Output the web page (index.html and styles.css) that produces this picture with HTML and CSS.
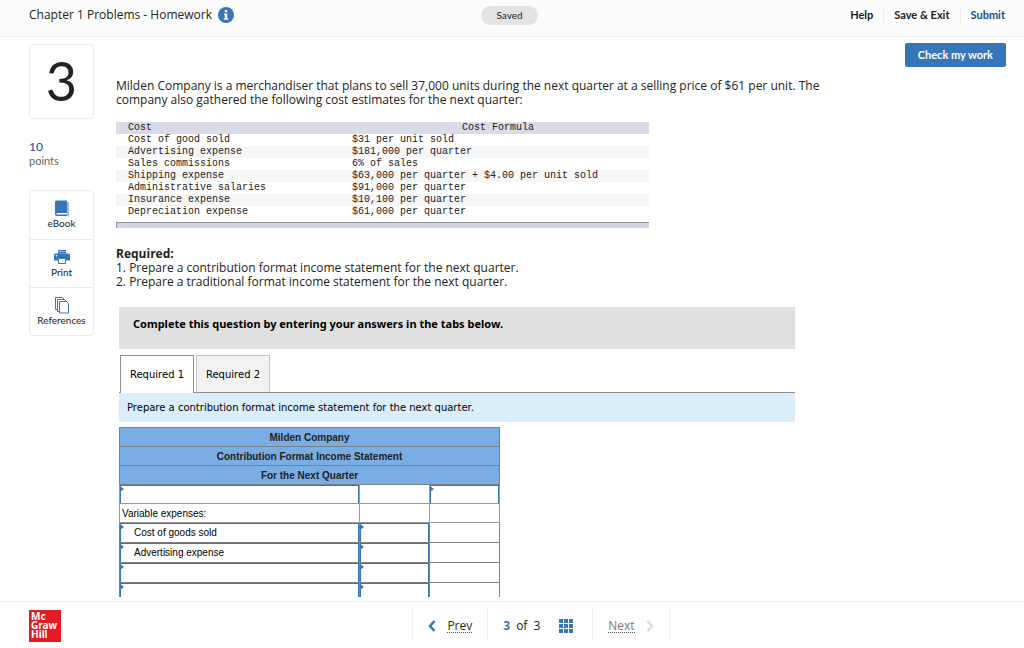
FILE: index.html
```html
<!DOCTYPE html>
<html lang="en">

<head>
  <meta charset="UTF-8" />
  <meta name="viewport" content="width=device-width, initial-scale=1.0" />
  <title>Chapter 1 Problems - Homework</title>
  <link rel="stylesheet" href="styles.css">
</head>

<body>
  <header class="topbar">
    <div class="topbar-title">
      <h1>Chapter 1 Problems - Homework</h1>
      <button class="info" type="button" aria-label="Assignment info">
        <svg width="16" height="16" viewBox="0 0 16 16">
          <circle cx="8" cy="8" r="8" fill="#3775b9" />
          <path d="M6.8 3h2.5v2.2H6.8zM6 6.4h3.3v4.8h1v1.5H5.8v-1.5h1V7.9H6z" fill="#fff" />
        </svg>
      </button>
    </div>
    <span class="saved">Saved</span>
    <nav class="topbar-nav">
      <a href="#">Help</a>
      <a href="#">Save &amp; Exit</a>
      <a href="#" class="submit">Submit</a>
    </nav>
  </header>

  <main class="main">
    <aside class="side">
      <div class="number">3</div>
      <div class="points"><span>10</span>points</div>
      <div class="tools">
        <button type="button">
          <svg width="16" height="17" viewBox="0 0 16 17">
            <path d="M13 2h2v14H3v-1h10z" fill="#9dbcdd" />
            <path d="M2.5 0.5H13V13H3.2a.8.8 0 0 0 0 1.6H13V16H3a2 2 0 0 1-2-2V2A1.5 1.5 0 0 1 2.5 0.5z" fill="#3775b9" />
          </svg>
          eBook
        </button>
        <button type="button">
          <svg width="16" height="17" viewBox="0 0 16 17">
            <path d="M4 1h8v4H4z" fill="#9dbcdd" />
            <path d="M4 1.5h8M4 3.5h8" stroke="#3775b9" />
            <path d="M1.5 4.5h13A1.5 1.5 0 0 1 16 6v5.500h-4V9H4v2.500H0V6A1.5 1.5 0 0 1 1.5 4.5z" fill="#3775b9" />
            <path d="M4.5 9.5h7v5h-7z" fill="#fff" stroke="#3775b9" />
            <circle cx="2.5" cy="6.8" r=".8" fill="#fff" />
          </svg>
          Print
        </button>
        <button type="button">
          <svg width="16" height="17" viewBox="0 0 16 17">
            <g fill="#fff" stroke="#3775b9">
              <path d="M1.5 0.5h7l2 2v10h-9z" />
              <path d="M3.5 2.5h7l2 2v10h-9z" />
              <path d="M5.5 4.5h7l2 2v9.5h-9z" />
            </g>
          </svg>
          References
        </button>
      </div>
    </aside>

    <section class="question">
      <p>Milden Company is a merchandiser that plans to sell 37,000 units during the next quarter at a selling price of $61 per unit. The company also gathered the following cost estimates for the next quarter:</p>

      <table class="costs">
        <thead>
          <tr><th>Cost</th><th>Cost Formula</th></tr>
        </thead>
        <tbody>
          <tr><td>Cost of good sold</td><td>$31 per unit sold</td></tr>
          <tr><td>Advertising expense</td><td>$181,000 per quarter</td></tr>
          <tr><td>Sales commissions</td><td>6% of sales</td></tr>
          <tr><td>Shipping expense</td><td>$63,000 per quarter + $4.00 per unit sold</td></tr>
          <tr><td>Administrative salaries</td><td>$91,000 per quarter</td></tr>
          <tr><td>Insurance expense</td><td>$10,100 per quarter</td></tr>
          <tr><td>Depreciation expense</td><td>$61,000 per quarter</td></tr>
        </tbody>
      </table>
      <div class="costs-end"></div>

      <p><strong>Required:</strong><br>
        1. Prepare a contribution format income statement for the next quarter.<br>
        2. Prepare a traditional format income statement for the next quarter.</p>

      <div class="worksheet">
        <div class="banner">Complete this question by entering your answers in the tabs below.</div>
        <div class="tabs" role="tablist">
          <button type="button" role="tab" class="tab active" aria-selected="true">Required 1</button>
          <button type="button" role="tab" class="tab" aria-selected="false">Required 2</button>
        </div>
        <div class="instruction">Prepare a contribution format income statement for the next quarter.</div>

        <table class="statement">
          <colgroup>
            <col class="col-label">
            <col class="col-amount">
            <col class="col-amount">
          </colgroup>
          <thead>
            <tr><th colspan="3">Milden Company</th></tr>
            <tr><th colspan="3">Contribution Format Income Statement</th></tr>
            <tr><th colspan="3">For the Next Quarter</th></tr>
          </thead>
          <tbody>
            <tr>
              <td class="entry"><input type="text" aria-label="Line 1 account"></td>
              <td></td>
              <td class="entry"><input type="text" aria-label="Line 1 total"></td>
            </tr>
            <tr>
              <td class="text">Variable expenses:</td>
              <td></td>
              <td></td>
            </tr>
            <tr class="tall">
              <td class="entry"><input type="text" value="Cost of goods sold" aria-label="Line 3 account"></td>
              <td class="entry"><input type="text" aria-label="Line 3 amount"></td>
              <td></td>
            </tr>
            <tr class="tall">
              <td class="entry"><input type="text" value="Advertising expense" aria-label="Line 4 account"></td>
              <td class="entry"><input type="text" aria-label="Line 4 amount"></td>
              <td></td>
            </tr>
            <tr class="tall">
              <td class="entry"><input type="text" aria-label="Line 5 account"></td>
              <td class="entry"><input type="text" aria-label="Line 5 amount"></td>
              <td></td>
            </tr>
            <tr class="tall">
              <td class="entry"><input type="text" aria-label="Line 6 account"></td>
              <td class="entry"><input type="text" aria-label="Line 6 amount"></td>
              <td></td>
            </tr>
          </tbody>
        </table>
      </div>
    </section>

    <button class="check" type="button">Check my work</button>
  </main>

  <footer class="footer">
    <div class="logo">Mc<br>Graw<br>Hill</div>
    <nav class="pager">
      <a href="#" class="prev">
        <svg width="8" height="12" viewBox="0 0 8 12"><path d="M6.5 1 2 6l4.5 5" fill="none" stroke="#3775b9" stroke-width="2.5" /></svg>
        <span>Prev</span>
      </a>
      <div class="count">
        <b>3</b><span>of</span><span>3</span>
        <button type="button" aria-label="Question list">
          <svg width="14" height="14" viewBox="0 0 14 14" fill="#3775b9">
            <path d="M0 0h4v4H0zM5 0h4v4H5zM10 0h4v4h-4zM0 5h4v4H0zM5 5h4v4H5zM10 5h4v4h-4zM0 10h4v4H0zM5 10h4v4H5zM10 10h4v4h-4z" />
          </svg>
        </button>
      </div>
      <a href="#" class="next">
        <span>Next</span>
        <svg width="8" height="12" viewBox="0 0 8 12"><path d="M1.5 1 6 6l-4.5 5" fill="none" stroke="#cfdeee" stroke-width="2.5" /></svg>
      </a>
    </nav>
  </footer>
</body>

</html>
```
FILE: styles.css
```css
* {
  box-sizing: border-box;
}

body {
  margin: 0;
  height: 100vh;
  display: flex;
  flex-direction: column;
  overflow: hidden;
  font-family: "Open Sans", sans-serif;
  font-size: 12px;
  line-height: 14px;
  color: #222;
  background: #fff;
}

button,
input {
  font: inherit;
  color: inherit;
}

button {
  padding: 0;
  border: none;
  background: none;
  cursor: pointer;
}

a {
  color: inherit;
  text-decoration: none;
}

svg {
  display: block;
}

/* top bar */
.topbar {
  display: grid;
  grid-template-columns: 1fr auto 1fr;
  align-items: center;
  height: 37px;
  padding: 0 19px 6px 14px;
  background: #fcfcfc;
  border-bottom: 1px solid #f1f1f1;
}

.topbar-title {
  display: flex;
  align-items: center;
  gap: 6px;
  padding-left: 15px;
}

.topbar-title h1 {
  margin: 0;
  font-size: 12px;
  font-weight: normal;
}

.saved {
  padding: 2px 15px 3px;
  border-radius: 10px;
  background: #e3e2e4;
  font-family: Lato, sans-serif;
  font-size: 10px;
}

.topbar-nav {
  display: flex;
  justify-content: flex-end;
  font-family: Lato, sans-serif;
  font-size: 11px;
  font-weight: bold;
}

.topbar-nav a {
  padding: 1px 10px;
  border-left: 1px solid #ececec;
}

.topbar-nav a:first-child {
  border-left: none;
}

.topbar-nav .submit {
  padding-right: 0;
  color: #154a8a;
}

/* question area */
.main {
  flex: 1;
  min-height: 0;
  display: flex;
  align-items: flex-start;
  overflow: hidden;
  margin-bottom: 4px;
  padding: 0 18px 0 29px;
}

.side {
  flex: none;
  width: 65px;
  padding-top: 7px;
}

.number {
  height: 75px;
  border: 1px solid #ececec;
  border-radius: 4px;
  font-family: Lato, sans-serif;
  font-size: 54px;
  line-height: 72px;
  text-align: center;
}

.points {
  padding: 21px 0 22px;
  font-family: Lato, sans-serif;
  font-size: 11px;
  line-height: 14px;
  color: #666;
}

.points span {
  display: block;
  font-size: 12px;
  color: #154a8a;
}

.tools {
  border: 1px solid #ececec;
  border-radius: 4px;
}

.tools button {
  display: flex;
  flex-direction: column;
  align-items: center;
  width: 100%;
  height: 48px;
  padding-top: 9px;
  font-family: Lato, sans-serif;
  font-size: 10px;
  line-height: 13px;
}

.tools button + button {
  border-top: 1px solid #ececec;
}

.question {
  flex: 1;
  max-width: 726px;
  padding: 42px 0 0 22px;
}

.question p {
  margin: 0;
  max-width: 704px;
}

.costs {
  width: 533px;
  margin-top: 15px;
  border-collapse: collapse;
  font-family: "Liberation Mono", monospace;
  font-size: 10px;
  line-height: 12px;
}

.costs th,
.costs td {
  padding: 0 5px;
  font-weight: normal;
  text-align: left;
}

.costs th:first-child,
.costs td:first-child {
  width: 231px;
  padding-left: 12px;
}

.costs th {
  background: #d9dce8;
}

.costs th:last-child {
  text-align: center;
}

.costs tbody tr:nth-child(even) {
  background: #f6f6f6;
}

.costs-end {
  width: 533px;
  height: 6px;
  margin: 4px 0 19px;
  border-top: 1px solid #8e949e;
  border-left: 1px solid #8e949e;
  background: #cfd5e1;
}

/* worksheet */
.worksheet {
  margin: 18px 25px 0 3px;
  font-family: "DejaVu Sans", sans-serif;
  font-size: 10px;
  color: #000;
}

.banner {
  height: 42px;
  padding: 10px 14px;
  background: #e0e0e0;
  font-family: "Noto Sans", sans-serif;
  font-size: 11px;
  font-weight: bold;
}

.tabs {
  display: flex;
  gap: 2px;
  margin-top: 6px;
  padding-left: 1px;
  border-bottom: 1px solid #8e8e8e;
}

.tab {
  width: 74px;
  height: 37px;
  padding-top: 1px;
  border: 1px solid #c4c4c4;
  border-bottom: none;
  background: #f2f2f2;
}

.tab.active {
  margin-bottom: -1px;
  height: 38px;
  border-color: #8e8e8e;
  background: #fff;
}

.instruction {
  padding: 8px 8px 7px;
  background: #daedfb;
}

.statement {
  width: 380px;
  margin-top: 5px;
  table-layout: fixed;
  border-collapse: collapse;
  font-family: "Liberation Sans", Arial, sans-serif;
  font-size: 10px;
  line-height: 14px;
}

.col-label {
  width: 240px;
}

.col-amount {
  width: 70px;
}

.statement th,
.statement td {
  height: 19px;
  padding: 0;
  border: 1px solid #999;
}

.statement th {
  padding-top: 1px;
  background: #79ade3;
  border-color: #7c8187;
  color: #222;
}

.statement .text {
  padding: 1px 0 0 2px;
}

.statement .tall td {
  height: 20px;
  border-color: #808080;
}

.statement .entry {
  position: relative;
}

.entry::before {
  content: "";
  position: absolute;
  top: 1px;
  left: 0;
  border: 3px solid transparent;
  border-left: 4px solid #3775b9;
  border-right: none;
}

.entry input {
  display: block;
  width: 100%;
  height: 18px;
  padding: 0 13px;
  border: 1px solid #3775b9;
  border-bottom: none;
  border-radius: 0;
  background: none;
  outline: none;
}

.tall .entry input {
  height: 19px;
  padding-bottom: 2px;
}

/* "Check my work" */
.check {
  flex: none;
  margin: 6px 0 0 auto;
  height: 24px;
  padding: 0 13px;
  border-radius: 2px;
  background: #3775b9;
  color: #fff;
  font-family: Lato, sans-serif;
  font-size: 11px;
  font-weight: bold;
}

/* footer */
.footer {
  display: grid;
  grid-template-columns: 1fr auto 1fr;
  height: 47px;
  padding: 4px 0 0 58px;
  border-top: 1px solid #f1f1f1;
}

.logo {
  width: 32px;
  height: 32px;
  margin: 4px 0 0 -29px;
  padding: 2px;
  background: #e31b23;
  color: #fff;
  font-family: "Noto Sans", sans-serif;
  font-size: 10px;
  font-weight: bold;
  line-height: 9px;
}

.pager {
  display: flex;
  height: 35px;
  border-right: 1px solid #f1f1f1;
}

.pager > * {
  display: flex;
  align-items: center;
  padding: 4px 15px 0;
  border-left: 1px solid #f1f1f1;
}

.pager a span {
  line-height: 13px;
  border-bottom: 1px dotted #555;
}

.prev,
.next {
  gap: 11px;
}

.count {
  gap: 6px;
}

.count b {
  color: #3775b9;
}

.count button {
  margin: 0 4px 0 13px;
}

.next {
  color: #777;
}
```
